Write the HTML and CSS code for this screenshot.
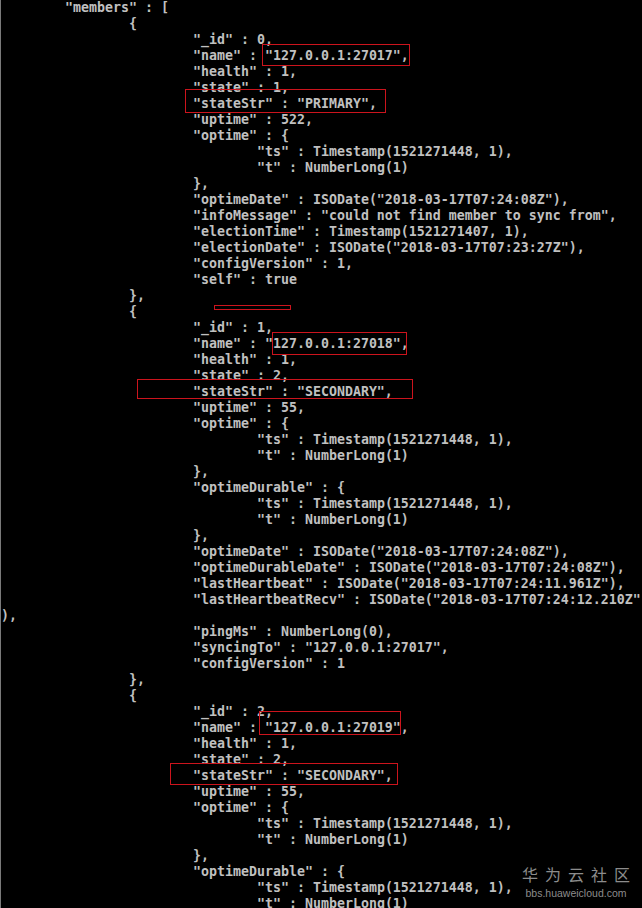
FILE: index.html
```html
<!DOCTYPE html>
<html>
<head>
<meta charset="utf-8">
<link rel="stylesheet" href="styles.css">
</head>
<body>
<div class="console">
<pre class="out">	"members" : [
		{
			"_id" : 0,
			"name" : "127.0.0.1:27017",
			"health" : 1,
			"state" : 1,
			"stateStr" : "PRIMARY",
			"uptime" : 522,
			"optime" : {
				"ts" : Timestamp(1521271448, 1),
				"t" : NumberLong(1)
			},
			"optimeDate" : ISODate("2018-03-17T07:24:08Z"),
			"infoMessage" : "could not find member to sync from",
			"electionTime" : Timestamp(1521271407, 1),
			"electionDate" : ISODate("2018-03-17T07:23:27Z"),
			"configVersion" : 1,
			"self" : true
		},
		{
			"_id" : 1,
			"name" : "127.0.0.1:27018",
			"health" : 1,
			"state" : 2,
			"stateStr" : "SECONDARY",
			"uptime" : 55,
			"optime" : {
				"ts" : Timestamp(1521271448, 1),
				"t" : NumberLong(1)
			},
			"optimeDurable" : {
				"ts" : Timestamp(1521271448, 1),
				"t" : NumberLong(1)
			},
			"optimeDate" : ISODate("2018-03-17T07:24:08Z"),
			"optimeDurableDate" : ISODate("2018-03-17T07:24:08Z"),
			"lastHeartbeat" : ISODate("2018-03-17T07:24:11.961Z"),
			"lastHeartbeatRecv" : ISODate("2018-03-17T07:24:12.210Z"
),
			"pingMs" : NumberLong(0),
			"syncingTo" : "127.0.0.1:27017",
			"configVersion" : 1
		},
		{
			"_id" : 2,
			"name" : "127.0.0.1:27019",
			"health" : 1,
			"state" : 2,
			"stateStr" : "SECONDARY",
			"uptime" : 55,
			"optime" : {
				"ts" : Timestamp(1521271448, 1),
				"t" : NumberLong(1)
			},
			"optimeDurable" : {
				"ts" : Timestamp(1521271448, 1),
				"t" : NumberLong(1)</pre>
<div class="mark m1"></div>
<div class="mark m2"></div>
<div class="mark m3"></div>
<div class="mark m4"></div>
<div class="mark m5"></div>
<div class="mark m6"></div>
<div class="mark m7"></div>
<div class="watermark">
<div class="wm-cn">华为云社区</div>
<div class="wm-en">bbs.huaweicloud.com</div>
</div>
</div>
</body>
</html>
```
FILE: styles.css
```css
html, body {
  margin: 0;
  padding: 0;
  background: #000;
}
.console {
  position: relative;
  width: 641px;
  height: 908px;
  overflow: hidden;
  background: #000;
  border-left: 1px solid #7a7a7a;
}
.out {
  margin: 0;
  padding: 0;
  font-family: "DejaVu Sans Mono", "Liberation Mono", monospace;
  font-weight: bold;
  font-size: 13.25px;
  letter-spacing: 0.02px;
  line-height: 16px;
  color: #c0c0c0;
  tab-size: 8;
  -moz-tab-size: 8;
  white-space: pre;
}
.mark {
  position: absolute;
  border: 1px solid #cc141d;
  box-sizing: border-box;
}
.m1 { left: 261px; top: 44px; width: 148px; height: 22px; }
.m2 { left: 184px; top: 89px; width: 201px; height: 24px; }
.m3 { left: 213px; top: 305px; width: 77px; height: 5px; }
.m4 { left: 271px; top: 332px; width: 135px; height: 23px; }
.m5 { left: 136px; top: 379px; width: 276px; height: 20px; }
.m6 { left: 258px; top: 711px; width: 142px; height: 24px; }
.m7 { left: 169px; top: 763px; width: 228px; height: 22px; }
.watermark {
  position: absolute;
  left: 519px;
  top: 862px;
  width: 112px;
  display: flex;
  flex-direction: column;
  align-items: center;
  gap: 1px;
  background: rgba(0,0,0,0.35);
}
.wm-cn {
  font-family: "Noto Sans CJK SC", sans-serif;
  font-size: 16px;
  line-height: 24px;
  letter-spacing: 7px;
  margin-right: -7px;
  color: #8c8c8c;
}
.wm-en {
  font-family: "Liberation Sans", Arial, sans-serif;
  font-size: 10.5px;
  line-height: 13px;
  color: #8c8c8c;
}
```
